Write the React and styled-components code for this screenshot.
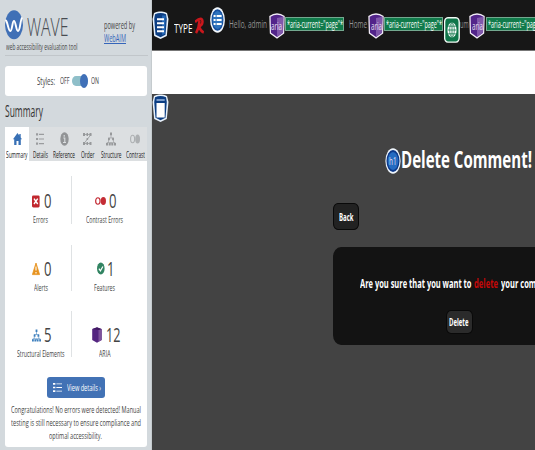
import React, { useLayoutEffect, useRef, useState } from "react";
import styled, { createGlobalStyle } from "styled-components";

const Global = createGlobalStyle`
  * { box-sizing: border-box; }
  body { margin: 0; overflow: hidden; font-family: "Open Sans", "Noto Sans", sans-serif; }
  svg { display: block; flex: none; }
`;

/* Condensed text: a line squeezed to a fixed width. */
const FitBox = styled.span`
  display: block;
  flex: none;
  width: ${(p) => p.$w}px;
  height: ${(p) => p.$lh || 14}px;
  line-height: ${(p) => p.$lh || 14}px;
  margin-left: ${(p) => p.$ml || 0}px;
  font-size: ${(p) => p.$size}px;
  font-weight: ${(p) => p.$weight || 400};
  color: ${(p) => p.$color || "inherit"};
  white-space: nowrap;
`;
const FitInner = styled.span`
  display: inline-block;
  transform-origin: 0 50%;
`;
function Fit({ w, lh, ml, size, weight, color, children }) {
  const ref = useRef(null);
  const [k, setK] = useState(1);
  useLayoutEffect(() => {
    setK(w / parseFloat(getComputedStyle(ref.current).width));
  }, [w]);
  return (
    <FitBox $w={w} $lh={lh} $ml={ml} $size={size} $weight={weight} $color={color}>
      <FitInner ref={ref} style={{ transform: `scaleX(${k})` }}>{children}</FitInner>
    </FitBox>
  );
}

const Page = styled.div`
  display: flex;
  width: 535px;
  height: 450px;
  overflow: hidden;
`;
const Sidebar = styled.aside`
  flex: none;
  width: 152px;
  height: 450px;
  padding: 0 5px;
  background: #d3d9dd;
  border-right: 1px solid #c5cbce;
  color: #444;
`;
const Brand = styled.header`
  display: flex;
  height: 56px;
  width: 143px;
  border-bottom: 1px solid #c1c6ca;
`;
const BrandMain = styled.div`
  width: 99px;
  padding-top: 10px;
`;
const LogoRow = styled.div`
  display: flex;
  height: 30px;
`;
const Powered = styled.div`
  padding-top: 19px;
`;
const Link = styled.a`
  color: #3565ba;
  text-decoration: underline;
`;
const StylesBox = styled.div`
  display: flex;
  align-items: center;
  width: 142px;
  height: 30px;
  margin-top: 10px;
  padding-left: 32px;
  background: #fff;
  border-radius: 3px;
`;
const Track = styled.span`
  display: flex;
  justify-content: flex-end;
  align-items: center;
  width: 16px;
  height: 10px;
  margin-left: 2px;
  border-radius: 4px / 5px;
  background: #8fbfc9;
`;
const Knob = styled.span`
  flex: none;
  width: 8px;
  height: 14px;
  border-radius: 50%;
  background: #4070b8;
`;
const Heading = styled.h2`
  margin: 5px 0 6px;
  height: 20px;
  font-weight: 400;
  color: #333;
`;
const Tabs = styled.nav`
  display: flex;
  width: 142px;
  height: 34px;
  background: #dcdfe1;
`;
const Tab = styled.div`
  display: flex;
  flex-direction: column;
  align-items: center;
  width: ${(p) => p.$w}px;
  padding-top: 5px;
  color: #222;
  background: ${(p) => (p.$on ? "#fff" : "transparent")};
  svg { margin-bottom: 2.5px; }
`;
const Panel = styled.section`
  width: 142px;
  height: 286px;
  padding-top: 15px;
  background: #fff;
  border-radius: 0 0 3px 3px;
`;
const Stats = styled.div`
  display: grid;
  grid-template-columns: 66px 76px;
  grid-template-rows: 48px 46px 46px;
  row-gap: 20.5px;
`;
const Stat = styled.div`
  display: flex;
  flex-direction: column;
  align-items: flex-start;
  padding-top: ${(p) => p.$top}px;
  border-left: ${(p) => (p.$line ? "1px solid #dfe2e4" : "0")};
`;
const Count = styled.div`
  display: flex;
  align-items: center;
  height: 22px;
  margin-left: ${(p) => p.$ml}px;
  margin-bottom: 1px;
`;
const ViewButton = styled.button`
  display: flex;
  align-items: center;
  width: 58px;
  height: 21px;
  margin: 20px 0 6px 42px;
  padding: 0 0 0 6px;
  border: 0;
  border-radius: 3px;
  background: #4272b5;
  color: #fff;
  font-family: inherit;
`;
const Note = styled.div`
  display: flex;
  flex-direction: column;
`;

const Main = styled.main`
  flex: none;
  width: 383px;
  height: 450px;
  overflow: hidden;
  background: #434343;
`;
const Navbar = styled.div`
  display: flex;
  align-items: flex-start;
  width: 400px;
  height: 51px;
  background: #171717;
  border-bottom: 1px solid #777;
`;
const Item = styled.div`
  flex: none;
  margin: ${(p) => p.$top}px 0 0 ${(p) => p.$ml || 0}px;
`;
const AriaTag = styled.span`
  display: flex;
  align-items: center;
  width: 59px;
  height: 14px;
  padding-left: 1px;
  background: #117b4b;
  border: 1px solid #73a88f;
  color: #fff;
`;
const WhiteBand = styled.div`
  height: 43px;
  background: #fff;
`;
const Content = styled.div`
  height: 356px;
`;
const TitleRow = styled.div`
  display: flex;
  height: 26px;
  margin: 25px 0 29px 233px;
  color: #fff;
`;
const DarkButton = styled.button`
  display: flex;
  align-items: center;
  justify-content: center;
  width: ${(p) => p.$w}px;
  height: ${(p) => p.$h}px;
  margin: ${(p) => p.$m};
  padding: 0;
  background: ${(p) => p.$bg};
  border: 1.5px solid #090909;
  border-radius: 5px / 6px;
  color: #fff;
  font-family: inherit;
`;
const Card = styled.div`
  width: 256px;
  height: 98px;
  margin: 17px 0 0 181px;
  padding-top: 28px;
  border-radius: 8px / 10px;
  background: #131313;
  color: #fff;
`;
const Question = styled.div`
  display: flex;
  height: 18px;
  padding-left: 27px;
`;

const WaveLogo = () => (
  <svg width="18" height="30" viewBox="0 0 18 30">
    <ellipse cx="9" cy="14.7" rx="9" ry="14.5" fill="#4070b6" />
    <path d="M0 10.5C2.3 9 3.2 21 5.2 21C7.3 21 7.2 11 9 11C10.8 11 11 21 13 21C15.3 21 15.1 10 17.2 7.5" fill="none" stroke="#fff" strokeWidth="1.9" />
  </svg>
);
const HomeIcon = () => (
  <svg width="9" height="14" viewBox="0 0 9 14">
    <path d="M4.5 1L0 7.2h1.2V13h2.3V9h2v4h2.3V7.2H9L7.7 5.4V2H6.3v1.4z" fill="#3870b5" />
  </svg>
);
const ListIcon = ({ color = "#9a9c9e", w = 8, h = 14 }) => (
  <svg width={w} height={h} viewBox="0 0 8 14" preserveAspectRatio="none">
    <path d="M0 2.4h2.1M0 7h2.1M0 11.6h2.1" stroke={color} strokeWidth="2.2" />
    <path d="M3 2.4h5M3 7h5M3 11.6h5" stroke={color} strokeWidth="1.2" />
  </svg>
);
const InfoIcon = () => (
  <svg width="9" height="14" viewBox="0 0 9 14">
    <ellipse cx="4.5" cy="7" rx="4.2" ry="6.7" fill="#929496" />
    <path d="M3.3 6h1.5v4.4M3 10.5h3M4.2 3v1.7" stroke="#dcdfe1" strokeWidth="1.1" fill="none" />
  </svg>
);
const OrderIcon = () => (
  <svg width="9" height="14" viewBox="0 0 9 14">
    <path d="M1 2.5h7L1 11.5h7" stroke="#97999b" strokeWidth=".8" fill="none" />
    <path d="M0 1h2v3H0zM3.5 1h1.5v3H3.5zM6.5 1h2v3h-2zM0 10h2v3H0zM3.5 10h1.5v3H3.5zM6.5 10h2v3h-2zM3.6 6h1.5v2H3.6z" fill="#97999b" />
  </svg>
);
const TreeIcon = ({ color = "#97999b", w = 10, h = 14 }) => (
  <svg width={w} height={h} viewBox="0 0 10 14" preserveAspectRatio="none">
    <path d="M5 2v4M2.5 7.5V6h5v1.5M2.5 8v2.5M7.5 8v2.5M1 12v-1.5h8V12M5 10.5V12" stroke={color} strokeWidth=".6" fill="none" />
    <path d="M4 .5h2v2.7H4zM2 5.8h1.9v2.5H2zM6.1 5.8H8v2.5H6.1zM0 11h2v2.5H0zM2.7 11h2v2.5h-2zM5.3 11h2v2.5h-2zM8 11h2v2.5H8z" fill={color} />
  </svg>
);
const ContrastIcon = ({ color = "#adb0b2", w = 10, h = 14 }) => (
  <svg width={w} height={h} viewBox="0 0 10 14" preserveAspectRatio="none">
    <ellipse cx="2.6" cy="7" rx="2" ry="3.8" fill="none" stroke={color} strokeWidth="1.1" />
    <ellipse cx="7.6" cy="7" rx="2.4" ry="4.6" fill={color} />
  </svg>
);
const ErrorIcon = () => (
  <svg width="8" height="13" viewBox="0 0 8 13">
    <rect y=".4" width="7.6" height="12" rx="1.3" fill="#c1272e" />
    <path d="M2 3.6L5.7 9M5.7 3.6L2 9" stroke="#fff" strokeWidth="1.4" />
  </svg>
);
const AlertIcon = () => (
  <svg width="8" height="14" viewBox="0 0 8 14">
    <path d="M4 1L.4 12.6h7.2z" fill="#e7931f" stroke="#e7931f" strokeWidth=".8" strokeLinejoin="round" />
    <path d="M4 4.5v4M4 10v1.6" stroke="#fff" strokeWidth="1.1" />
  </svg>
);
const CheckIcon = () => (
  <svg width="8" height="13" viewBox="0 0 8 13">
    <ellipse cx="3.8" cy="6.5" rx="3.8" ry="6" fill="#328462" />
    <path d="M1.9 6.6L3.4 8.8L5.9 4.5" stroke="#fff" strokeWidth="1.2" fill="none" />
  </svg>
);
const CubeIcon = () => (
  <svg width="10" height="16" viewBox="0 0 10 16">
    <path d="M5 .2L9.7 2v11L5 15.8L.2 13V2z" fill="#542580" />
    <path d="M6.5 3L9.7 2v11l-3.2 1.8z" fill="#7e539b" />
    <path d="M.5 2L5 .5L9.4 2L6.5 3z" fill="#3f185f" />
  </svg>
);
const PageBadge = ({ doc }) => (
  <svg width="17" height="29" viewBox="0 0 17 29">
    <path d="M2 2Q5 0 8.5 .5Q12 0 15 2L16.5 8L14.8 25L8.5 28L2.2 25L.5 8z" fill="#e9f2fb" />
    <path d="M3 3.3Q8.5 .8 14 3.3L14.8 8L13.5 23.7L8.5 26.3L3.5 23.7L2.2 8z" fill="#0c3e83" />
    {doc ? (
      <g><path d="M4.5 9h8.2v14.5H4.5z" fill="#fff" /><path d="M4.5 6h8.2" stroke="#9fbce2" strokeWidth="1.5" /></g>
    ) : (
      <g><path d="M10 4.5h3.7l-.8 18.3L10 24z" fill="#2468b7" /><path d="M5 8.3h7M5 12.3h7M5 16.3h7M5 20.3h7" stroke="#fff" strokeWidth="2" /></g>
    )}
  </svg>
);
const RMark = () => (
  <svg width="9" height="18" viewBox="0 0 9 18">
    <path d="M0 5Q4 1 6.5 2Q8.2 3.5 7 7Q5.5 9.5 3 9.5M4.5 3.5Q4 11 1 16.2M4 9.5Q5.5 14 8.8 15.5" stroke="#c9171c" strokeWidth="2.5" fill="none" />
  </svg>
);
const ListBadge = () => (
  <svg width="15" height="26" viewBox="0 0 15 26">
    <ellipse cx="7.5" cy="13" rx="7.4" ry="12.8" fill="#f3f8fd" />
    <ellipse cx="7.5" cy="13" rx="6" ry="10.8" fill="#17509f" />
    <ellipse cx="7.5" cy="13" rx="4.9" ry="9" fill="#2e73bd" />
    <path d="M3.6 9h2M3.6 13h2M3.6 17h2M6.6 9h5M6.6 13h5M6.6 17h5" stroke="#fff" strokeWidth="2" />
  </svg>
);
const GlyphBadge = styled.span`
  display: grid;
  width: 16px;
  height: 26px;
  color: #e8e1f1;
  > * { grid-area: 1 / 1; }
  > span { align-self: center; justify-self: center; }
`;
const AriaBadge = () => (
  <GlyphBadge>
    <svg width="16" height="26" viewBox="0 0 16 26">
      <path d="M8 .2Q12 .5 15.7 3L15.2 20.5L8 25.8L.8 20.5L.3 3Q4 .5 8 .2z" fill="#f3edf8" />
      <path d="M8 1.8Q11.5 2 14.4 3.8L14 19.7L8 24L2 19.7L1.6 3.8Q4.5 2 8 1.8z" fill="#52248a" />
      <path d="M8 5L14.4 3.8L14 19.7L8 24z" fill="#8058ab" />
    </svg>
    <Fit w={11} size={10.5}>aria</Fit>
  </GlyphBadge>
);
const H1Badge = () => (
  <GlyphBadge>
    <svg width="16" height="26" viewBox="0 0 16 26">
      <ellipse cx="8" cy="13" rx="7.6" ry="12.7" fill="#eef5fc" />
      <ellipse cx="8" cy="13" rx="6.5" ry="11" fill="#0b388a" />
      <ellipse cx="8" cy="13" rx="5.3" ry="9" fill="#256bc1" />
    </svg>
    <Fit w={7.5} size={10.5}>h1</Fit>
  </GlyphBadge>
);
const GlobeBadge = () => (
  <svg width="16" height="26" viewBox="0 0 16 26">
    <rect x=".6" y=".7" width="14.6" height="24.4" rx="3.2" ry="4.5" fill="#10764a" stroke="#f2fbf6" strokeWidth="1.4" />
    <ellipse cx="8" cy="13" rx="4.6" ry="7.6" fill="#fff" />
    <path d="M8 5.4v15.2M3.5 13h9M4.2 9.2h7.6M4.2 16.8h7.6" stroke="#10764a" strokeWidth=".8" />
    <ellipse cx="8" cy="13" rx="2.3" ry="7.4" fill="none" stroke="#10764a" strokeWidth=".7" />
  </svg>
);

const tabs = [
  { label: "Summary", cell: 24, w: 21.5, icon: <HomeIcon />, on: true },
  { label: "Details", cell: 22.5, w: 15, icon: <ListIcon /> },
  { label: "Reference", cell: 25, w: 22, icon: <InfoIcon /> },
  { label: "Order", cell: 22.5, w: 13.5, icon: <OrderIcon /> },
  { label: "Structure", cell: 24, w: 20.5, icon: <TreeIcon /> },
  { label: "Contrast", cell: 24, w: 19, icon: <ContrastIcon /> },
];
const stats = [
  { n: "0", nw: 7.5, gap: 3.5, x: 27, label: "Errors", lx: 28, lw: 15, top: 14, icon: <ErrorIcon /> },
  { n: "0", nw: 7.5, gap: 2.5, x: 23, label: "Contrast Errors", lx: 14, lw: 37, top: 14, icon: <ContrastIcon color="#c42c35" w={11} h={12} />, line: true },
  { n: "0", nw: 7.5, gap: 3.5, x: 27, label: "Alerts", lx: 28.5, lw: 14, top: 13, icon: <AlertIcon /> },
  { n: "1", nw: 7.5, gap: 2, x: 25, label: "Features", lx: 22, lw: 21, top: 13, icon: <CheckIcon />, line: true },
  { n: "5", nw: 7.5, gap: 2.5, x: 27, label: "Structural Elements", lx: 11.5, lw: 47.5, top: 13, icon: <TreeIcon color="#3d7fbd" w={9} h={13} /> },
  { n: "12", nw: 14.5, gap: 4, x: 20, label: "ARIA", lx: 27, lw: 11.5, top: 13, icon: <CubeIcon />, line: true },
];
const AriaCurrent = () => (
  <AriaTag><Fit w={56} size={11} lh={12}>*aria-current="page"*</Fit></AriaTag>
);

export default function App() {
  return (
    <Page>
      <Global />
      <Sidebar>
        <Brand>
          <BrandMain>
            <LogoRow>
              <WaveLogo />
              <Fit w={41.5} ml={3.5} lh={32} size={26} weight={350} color="#484c51">WAVE</Fit>
            </LogoRow>
            <Fit w={71.5} ml={1} size={8.5}>web accessibility evaluation tool</Fit>
          </BrandMain>
          <Powered>
            <Fit w={31} size={10.5} lh={12.5}>powered by</Fit>
            <Fit w={22} size={10.5} lh={12.5}><Link>WebAIM</Link></Fit>
          </Powered>
        </Brand>
        <StylesBox>
          <Fit w={18} size={11}>Styles:</Fit>
          <Fit w={9.5} ml={5} size={9.5}>OFF</Fit>
          <Track><Knob /></Track>
          <Fit w={8} ml={3.5} size={9.5}>ON</Fit>
        </StylesBox>
        <Heading><Fit w={38} size={16} lh={20}>Summary</Fit></Heading>
        <Tabs>
          {tabs.map((t) => (
            <Tab key={t.label} $w={t.cell} $on={t.on}>
              {t.icon}
              <Fit w={t.w} lh={11} size={8.5}>{t.label}</Fit>
            </Tab>
          ))}
        </Tabs>
        <Panel>
          <Stats>
            {stats.map((s) => (
              <Stat key={s.label} $top={s.top} $line={s.line}>
                <Count $ml={s.x}>
                  {s.icon}
                  <Fit w={s.nw} ml={s.gap} lh={22} size={19.5} weight={400} color="#444">{s.n}</Fit>
                </Count>
                <Fit w={s.lw} ml={s.lx} size={9}>{s.label}</Fit>
              </Stat>
            ))}
          </Stats>
          <ViewButton>
            <ListIcon color="#fff" w={9} h={11} />
            <Fit w={34} ml={4.5} size={9.5}>View details ›</Fit>
          </ViewButton>
          <Note>
            <Fit w={130} ml={6} lh={12.8} size={9.5}>Congratulations! No errors were detected! Manual</Fit>
            <Fit w={130} ml={6} lh={12.8} size={9.5}>testing is still necessary to ensure compliance and</Fit>
            <Fit w={53} ml={44} lh={12.8} size={9.5}>optimal accessibility.</Fit>
          </Note>
        </Panel>
      </Sidebar>
      <Main>
        <Navbar>
          <Item $top={11}><PageBadge /></Item>
          <Item $top={20} $ml={5}><Fit w={18.5} lh={16} size={13.5} color="#fff">TYPE</Fit></Item>
          <Item $top={17} $ml={2}><RMark /></Item>
          <Item $top={7} $ml={6.5}><ListBadge /></Item>
          <Item $top={17} $ml={4}><Fit w={38} size={11.5} color="#929292">Hello, admin</Fit></Item>
          <Item $top={12.5} $ml={1.5}><AriaBadge /></Item>
          <Item $top={17} $ml={0}><AriaCurrent /></Item>
          <Item $top={17} $ml={5.5}><Fit w={18} size={11.5} color="#929292">Home</Fit></Item>
          <Item $top={12.5} $ml={1}><AriaBadge /></Item>
          <Item $top={17} $ml={0}><AriaCurrent /></Item>
          <Item $top={17} $ml={1}><GlobeBadge /></Item>
          <Item $top={17} $ml={-0.5}><Fit w={8.5} size={11.5} color="#929292">um</Fit></Item>
          <Item $top={12.5} $ml={1}><AriaBadge /></Item>
          <Item $top={17} $ml={0.5}><AriaCurrent /></Item>
        </Navbar>
        <WhiteBand />
        <Content>
          <PageBadge doc />
          <TitleRow>
            <H1Badge />
            <Fit w={131} ml={0} lh={21} size={24} weight={700}>Delete Comment!</Fit>
          </TitleRow>
          <DarkButton $w={26} $h={27} $m="0 0 0 181px" $bg="#222">
            <Fit w={14.5} size={10.5} weight={700}>Back</Fit>
          </DarkButton>
          <Card>
            <Question>
              <Fit w={111.5} lh={18} size={12.5} weight={700}>Are you sure that you want to</Fit>
              <Fit w={24} ml={2.5} lh={18} size={12.5} weight={700} color="#c30808">delete</Fit>
              <Fit w={59} ml={2.5} lh={18} size={12.5} weight={700}>your comment?</Fit>
            </Question>
            <DarkButton $w={27} $h={24} $m="17px 0 0 112.5px" $bg="#2b2b2b">
              <Fit w={19.5} size={11} weight={700}>Delete</Fit>
            </DarkButton>
          </Card>
        </Content>
      </Main>
    </Page>
  );
}
